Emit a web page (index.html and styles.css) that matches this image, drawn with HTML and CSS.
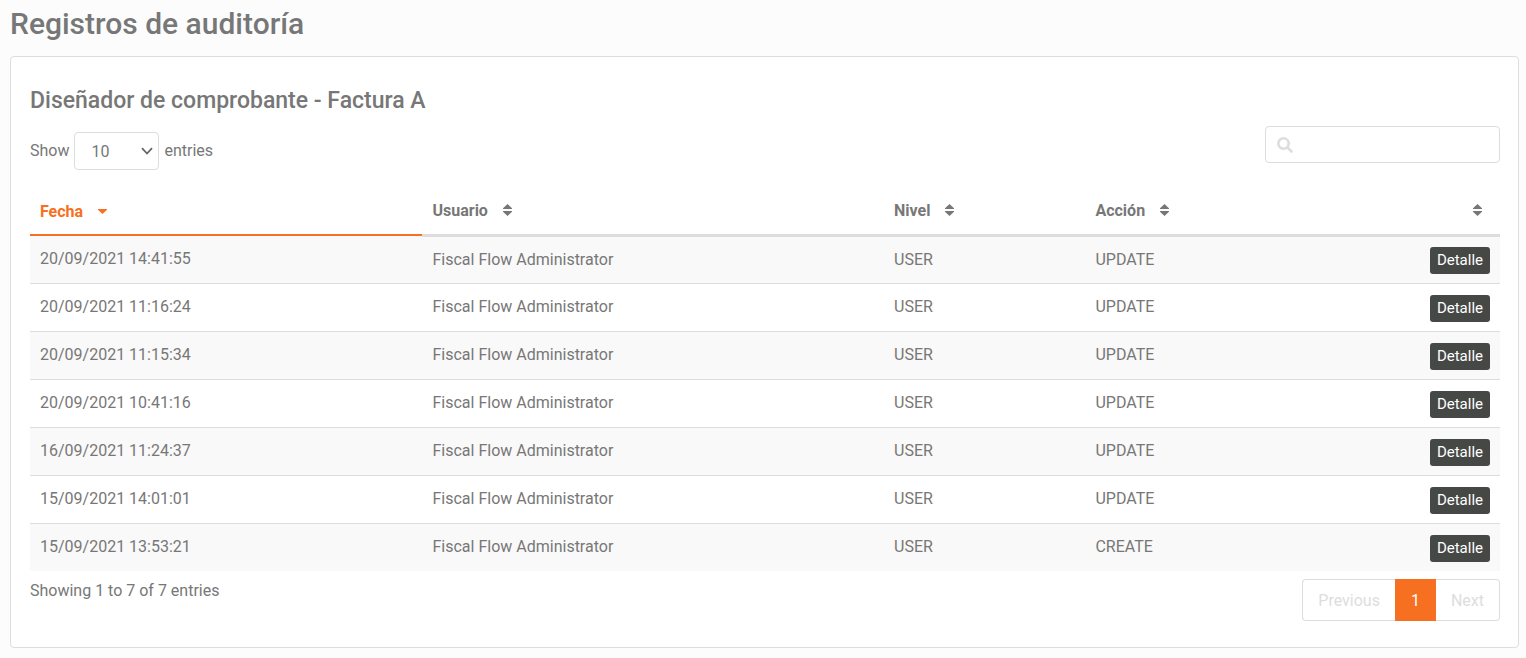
FILE: index.html
```html
<!DOCTYPE html>
<html lang="es">
<head>
    <meta charset="UTF-8">
    <meta name="viewport" content="width=device-width, initial-scale=1.0">
    <title>Registros de auditoría</title>
    <link rel="stylesheet" href="styles.css">
</head>
<body>
    <!-- Sort icons, reused by the table header -->
    <svg class="sprite" aria-hidden="true">
        <symbol id="sort" viewBox="0 0 9 12">
            <path d="M4.5 0 9 4.2V5H0v-.8zM0 7h9v.8L4.5 12 0 7.8z"/>
        </symbol>
        <symbol id="sort-down" viewBox="0 0 9 12">
            <path d="M0 4h9v.8L4.5 9 0 4.8z"/>
        </symbol>
    </svg>

    <h1>Registros de auditoría</h1>

    <main class="card">
        <h2>Diseñador de comprobante - Factura A</h2>

        <div class="toolbar">
            <label class="length">
                Show
                <select>
                    <option>10</option>
                    <option>25</option>
                    <option>50</option>
                    <option>100</option>
                </select>
                entries
            </label>
            <label class="search">
                <svg viewBox="0 0 16 16" aria-hidden="true">
                    <circle cx="6.5" cy="6.5" r="5.2"/>
                    <path d="M10.5 10.5 14.5 14.5"/>
                </svg>
                <input type="search" aria-label="Buscar">
            </label>
        </div>

        <table>
            <colgroup>
                <col class="col-date">
                <col class="col-user">
                <col class="col-level">
                <col>
            </colgroup>
            <thead>
                <tr>
                    <th class="sorted">Fecha<svg class="sort"><use href="#sort-down"/></svg></th>
                    <th>Usuario<svg class="sort"><use href="#sort"/></svg></th>
                    <th>Nivel<svg class="sort"><use href="#sort"/></svg></th>
                    <th>Acción<svg class="sort"><use href="#sort"/></svg></th>
                    <th class="actions"><svg class="sort"><use href="#sort"/></svg></th>
                </tr>
            </thead>
            <tbody>
                <tr>
                    <td>20/09/2021 14:41:55</td>
                    <td>Fiscal Flow Administrator</td>
                    <td>USER</td>
                    <td>UPDATE</td>
                    <td class="actions"><button type="button">Detalle</button></td>
                </tr>
                <tr>
                    <td>20/09/2021 11:16:24</td>
                    <td>Fiscal Flow Administrator</td>
                    <td>USER</td>
                    <td>UPDATE</td>
                    <td class="actions"><button type="button">Detalle</button></td>
                </tr>
                <tr>
                    <td>20/09/2021 11:15:34</td>
                    <td>Fiscal Flow Administrator</td>
                    <td>USER</td>
                    <td>UPDATE</td>
                    <td class="actions"><button type="button">Detalle</button></td>
                </tr>
                <tr>
                    <td>20/09/2021 10:41:16</td>
                    <td>Fiscal Flow Administrator</td>
                    <td>USER</td>
                    <td>UPDATE</td>
                    <td class="actions"><button type="button">Detalle</button></td>
                </tr>
                <tr>
                    <td>16/09/2021 11:24:37</td>
                    <td>Fiscal Flow Administrator</td>
                    <td>USER</td>
                    <td>UPDATE</td>
                    <td class="actions"><button type="button">Detalle</button></td>
                </tr>
                <tr>
                    <td>15/09/2021 14:01:01</td>
                    <td>Fiscal Flow Administrator</td>
                    <td>USER</td>
                    <td>UPDATE</td>
                    <td class="actions"><button type="button">Detalle</button></td>
                </tr>
                <tr>
                    <td>15/09/2021 13:53:21</td>
                    <td>Fiscal Flow Administrator</td>
                    <td>USER</td>
                    <td>CREATE</td>
                    <td class="actions"><button type="button">Detalle</button></td>
                </tr>
            </tbody>
        </table>

        <div class="footer">
            <div>Showing 1 to 7 of 7 entries</div>
            <nav class="pagination">
                <button type="button" disabled>Previous</button>
                <button type="button" class="active">1</button>
                <button type="button" disabled>Next</button>
            </nav>
        </div>
    </main>
</body>
</html>
```
FILE: styles.css
```css
* {
    box-sizing: border-box;
}

body {
    font-family: Roboto, Arial, sans-serif;
    font-size: 16px;
    line-height: 24px;
    color: #777;
    background-color: #fcfcfc;
    margin: 0;
    padding: 4px 7px 10px 10px;
}

button, input, select {
    font-family: inherit;
    color: inherit;
}

h1 {
    font-size: 30px;
    font-weight: 500;
    line-height: 40px;
    margin: 0 0 12px;
}

h2 {
    font-size: 23px;
    font-weight: 500;
    line-height: 30px;
    margin: 0 0 10px;
}

.sprite {
    display: none;
}

.card {
    background-color: white;
    border: 1px solid #ddd;
    border-radius: 4px;
    padding: 29px 18px 26px 19px;
}

.toolbar {
    display: flex;
    justify-content: space-between;
    align-items: flex-start;
}

.length {
    display: flex;
    align-items: center;
    gap: 5px;
    padding-top: 6px;
}

.length select {
    width: 85px;
    height: 38px;
    padding: 0 16px;
    font-size: 16px;
    border: 1px solid #ddd;
    border-radius: 4px;
    appearance: none;
    background: white url("data:image/svg+xml,%3Csvg xmlns='http://www.w3.org/2000/svg' viewBox='0 0 12 8'%3E%3Cpath d='M1 1.2 6 6.5l5-5.3' fill='none' stroke='%23666' stroke-width='1.8'/%3E%3C/svg%3E") no-repeat right 5px center / 12px 8px;
}

.search {
    display: flex;
    align-items: center;
    width: 235px;
    height: 37px;
    padding: 1px 11px 0;
    background-color: white;
    border: 1px solid #ddd;
    border-radius: 4px;
}

.search svg {
    flex: none;
    width: 16px;
    height: 16px;
    fill: none;
    stroke: #ddd;
    stroke-width: 2.6;
    stroke-linecap: round;
}

.search input {
    width: 100%;
    padding: 0 8px;
    font-size: 16px;
    border: none;
    outline: none;
    background: none;
}

table {
    width: 100%;
    margin-top: 18px;
    border-collapse: collapse;
    table-layout: fixed;
}

.col-date {
    width: 26.7%;
}

.col-user {
    width: 31.4%;
}

.col-level {
    width: 13.7%;
}

th {
    height: 47px;
    padding: 1px 10px 0;
    text-align: left;
    border-bottom: 3px solid #ddd;
}

th.sorted {
    color: #f76f20;
    border-bottom: 2px solid #f76f20;
}

.sort {
    width: 9px;
    height: 12px;
    margin-left: 15px;
    fill: currentColor;
}

td {
    height: 48px;
    padding: 0 10px;
    border-top: 1px solid #ddd;
}

tbody tr:nth-child(odd) {
    background-color: #f9f9f9;
}

.actions {
    text-align: right;
}

th.actions {
    padding-right: 18px;
}

td.actions {
    padding-top: 2px;
}

td button {
    padding: 3px 7px;
    font-size: 15px;
    line-height: 21px;
    color: white;
    background-color: #464846;
    border: none;
    border-radius: 3px;
    cursor: pointer;
}

.footer {
    display: flex;
    justify-content: space-between;
    align-items: flex-start;
    padding-top: 8px;
}

.pagination {
    display: flex;
}

.pagination button {
    height: 42px;
    padding: 0 15px;
    font-size: 16px;
    color: #ddd;
    background-color: white;
    border: 1px solid #ddd;
}

.pagination button:first-child {
    border-right: none;
    border-radius: 4px 0 0 4px;
}

.pagination button:last-child {
    border-left: none;
    border-radius: 0 4px 4px 0;
}

.pagination .active {
    color: white;
    background-color: #f76f20;
    border-color: #f76f20;
}
```
